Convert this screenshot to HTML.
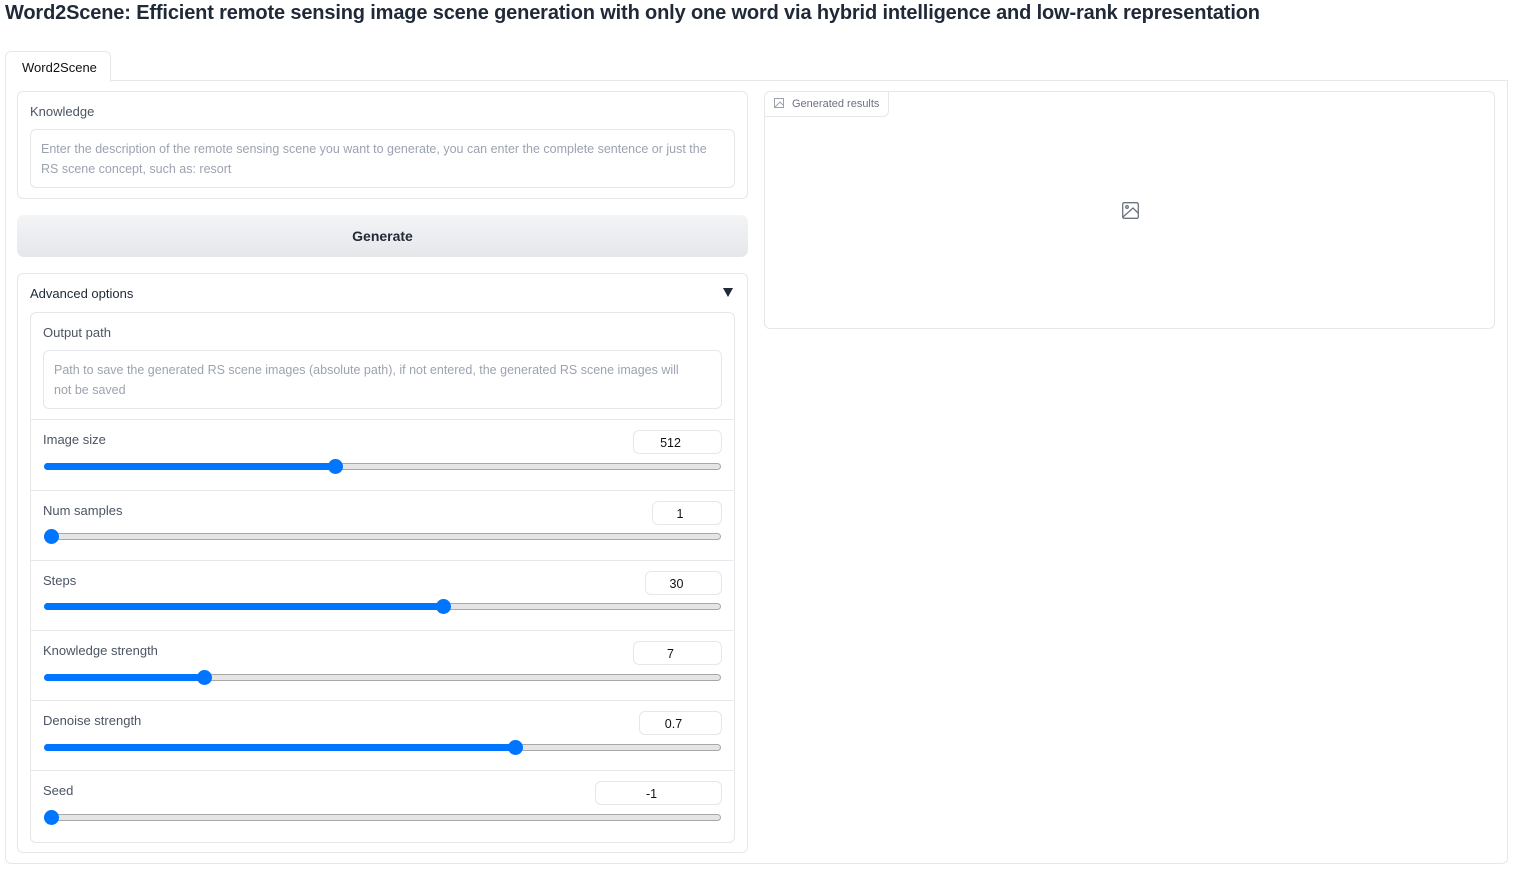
<!DOCTYPE html>
<html><head><style>
*{box-sizing:border-box;margin:0;padding:0}
body{width:1513px;height:870px;background:#fff;font-family:"Liberation Sans",sans-serif;position:relative;overflow:hidden;color:#374151}
.a{position:absolute}
.box{position:absolute;border:1px solid #e5e7eb;border-radius:6px;background:#fff}
.lbl{position:absolute;font-size:13px;color:#4b5563}
.ta{position:absolute;border:1px solid #e5e7eb;border-radius:6px;font-size:12.5px;color:#9ca3af;line-height:20px;padding:9px 24px 9px 10px}
.track{position:absolute;left:44px;width:677px;height:7px;border:1px solid #a8a8a8;border-radius:4px;background:#e5e5e5}
.fill{position:absolute;left:44px;height:7px;border-radius:4px;background:#0075ff}
.thumb{position:absolute;width:15px;height:15px;border-radius:50%;background:#0075ff}
.num{position:absolute;height:24px;border:1px solid #e5e7eb;border-radius:6px;font-size:12.5px;text-align:center;line-height:24px;color:#111;padding-right:14px}
.div{position:absolute;left:31px;width:702px;height:1px;background:#e5e7eb}
</style></head><body>
<div class="a" style="left:5px;top:2px;font-size:20px;font-weight:bold;color:#1f2937;letter-spacing:-0.15px">Word2Scene: Efficient remote sensing image scene generation with only one word via hybrid intelligence and low-rank representation</div>
<div class="a" style="left:5px;top:80px;width:1503px;height:784px;border:1px solid #e5e7eb;border-radius:0 0 6px 6px"></div>
<div class="a" style="left:5px;top:51px;width:106px;height:31px;border:1px solid #e5e7eb;border-bottom:none;border-radius:6px 6px 0 0;background:#fff;font-size:13px;color:#111;padding:8px 0 0 16px">Word2Scene</div>

<div class="box" style="left:17px;top:91px;width:731px;height:108px"></div>
<div class="lbl" style="left:30px;top:104px">Knowledge</div>
<div class="ta" style="left:30px;top:129px;width:705px;height:59px">Enter the description of the remote sensing scene you want to generate, you can enter the complete sentence or just the RS scene concept, such as: resort</div>

<div class="a" style="left:17px;top:215px;width:731px;height:42px;border-radius:7px;background:linear-gradient(to bottom,#f3f4f6,#e5e7eb);font-size:14px;font-weight:bold;color:#1f2937;text-align:center;line-height:43px">Generate</div>

<div class="box" style="left:17px;top:273px;width:731px;height:580px"></div>
<div class="lbl" style="left:30px;top:286px;color:#1f2937">Advanced options</div>
<div class="a" style="left:723px;top:288px;width:0;height:0;border-left:5px solid transparent;border-right:5px solid transparent;border-top:9px solid #1f2937"></div>
<div class="box" style="left:30px;top:312px;width:705px;height:531px"></div>
<div class="lbl" style="left:43px;top:325px">Output path</div>
<div class="ta" style="left:43px;top:350px;width:679px;height:59px">Path to save the generated RS scene images (absolute path), if not entered, the generated RS scene images will not be saved</div>

<div class="div" style="top:419px"></div><div class="div" style="top:490px"></div><div class="div" style="top:560px"></div><div class="div" style="top:630px"></div><div class="div" style="top:700px"></div><div class="div" style="top:770px"></div>

<div class="lbl" style="left:43px;top:432px">Image size</div><div class="num" style="left:633px;top:430px;width:89px">512</div>
<div class="track" style="top:463px"></div><div class="fill" style="top:463px;width:291px"></div><div class="thumb" style="left:328px;top:459px"></div>

<div class="lbl" style="left:43px;top:503px">Num samples</div><div class="num" style="left:652px;top:501px;width:70px">1</div>
<div class="track" style="top:533px"></div><div class="thumb" style="left:44px;top:529px"></div>

<div class="lbl" style="left:43px;top:573px">Steps</div><div class="num" style="left:645px;top:571px;width:77px">30</div>
<div class="track" style="top:603px"></div><div class="fill" style="top:603px;width:399px"></div><div class="thumb" style="left:436px;top:599px"></div>

<div class="lbl" style="left:43px;top:643px">Knowledge strength</div><div class="num" style="left:633px;top:641px;width:89px">7</div>
<div class="track" style="top:674px"></div><div class="fill" style="top:674px;width:160px"></div><div class="thumb" style="left:197px;top:670px"></div>

<div class="lbl" style="left:43px;top:713px">Denoise strength</div><div class="num" style="left:639px;top:711px;width:83px">0.7</div>
<div class="track" style="top:744px"></div><div class="fill" style="top:744px;width:471px"></div><div class="thumb" style="left:508px;top:740px"></div>

<div class="lbl" style="left:43px;top:783px">Seed</div><div class="num" style="left:595px;top:781px;width:127px">-1</div>
<div class="track" style="top:814px"></div><div class="thumb" style="left:44px;top:810px"></div>

<div class="box" style="left:764px;top:91px;width:731px;height:238px"></div>
<div class="a" style="left:764px;top:91px;width:125px;height:26px;border:1px solid #e5e7eb;border-top:none;border-left:none;border-radius:0 0 6px 0;font-size:11px;color:#6b7280;padding:7px 0 0 28px">Generated results</div>
<svg class="a" style="left:774px;top:98px" width="10" height="10" viewBox="0 0 10 10" fill="none" stroke="#9ca3af" stroke-width="1"><rect x="0.5" y="0.5" width="9" height="9"/><path d="M1 9L6 4L9 7"/></svg>
<svg class="a" style="left:1122px;top:202px" width="17" height="17" viewBox="0 0 17 17" fill="none" stroke="#6b7280" stroke-width="1.3"><rect x="0.7" y="0.7" width="15.6" height="15.6" rx="1.5"/><circle cx="5" cy="5" r="1.3"/><path d="M1 15L11 6L16 11"/></svg>
</body></html>
